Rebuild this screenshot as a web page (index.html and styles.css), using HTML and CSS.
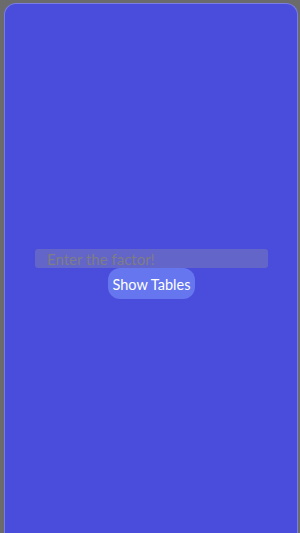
FILE: index.html
```html
<!DOCTYPE html>
<html lang="en">
<head>
  <meta charset="UTF-8" />
  <meta name="viewport" content="width=device-width, initial-scale=1" />
  <title>Tables</title>
  <link rel="stylesheet" href="styles.css">
</head>
<body>
  <div class="screen">
    <div class="form">
      <input class="factor-input" type="text" placeholder="Enter the factor!" />
      <button class="show-button">Show Tables</button>
    </div>
  </div>
</body>
</html>
```

FILE: styles.css
```css
html, body {
  margin: 0;
  height: 100%;
  overflow: hidden;
}
body {
  font-family: 'Lato', 'Open Sans', sans-serif;
  background-color: #6b6b6b;
  padding: 3px 2px 0 4px;
  box-sizing: border-box;
}
.screen {
  background-color: #4a4cdc;
  border: 1px solid #7b7de6;
  border-bottom: none;
  border-radius: 12px 12px 0 0;
  height: 100%;
  box-sizing: border-box;
  padding-top: 245px;
}
.form {
  display: flex;
  flex-direction: column;
  align-items: center;
}
.factor-input {
  width: 233px;
  height: 19px;
  box-sizing: border-box;
  margin-left: 1px;
  border: none;
  border-radius: 3px;
  background-color: #6465c9;
  padding: 0 12px;
  font-family: inherit;
  font-size: 15px;
  color: #ddd;
  outline: none;
}
.factor-input::placeholder {
  color: #7d7d86;
}
.show-button {
  margin-left: 1px;
  background-color: #6576ef;
  color: #fff;
  border: none;
  border-radius: 12px;
  padding: 2px 5px 0;
  height: 31px;
  font-family: inherit;
  font-size: 14.5px;
  cursor: pointer;
}
```
